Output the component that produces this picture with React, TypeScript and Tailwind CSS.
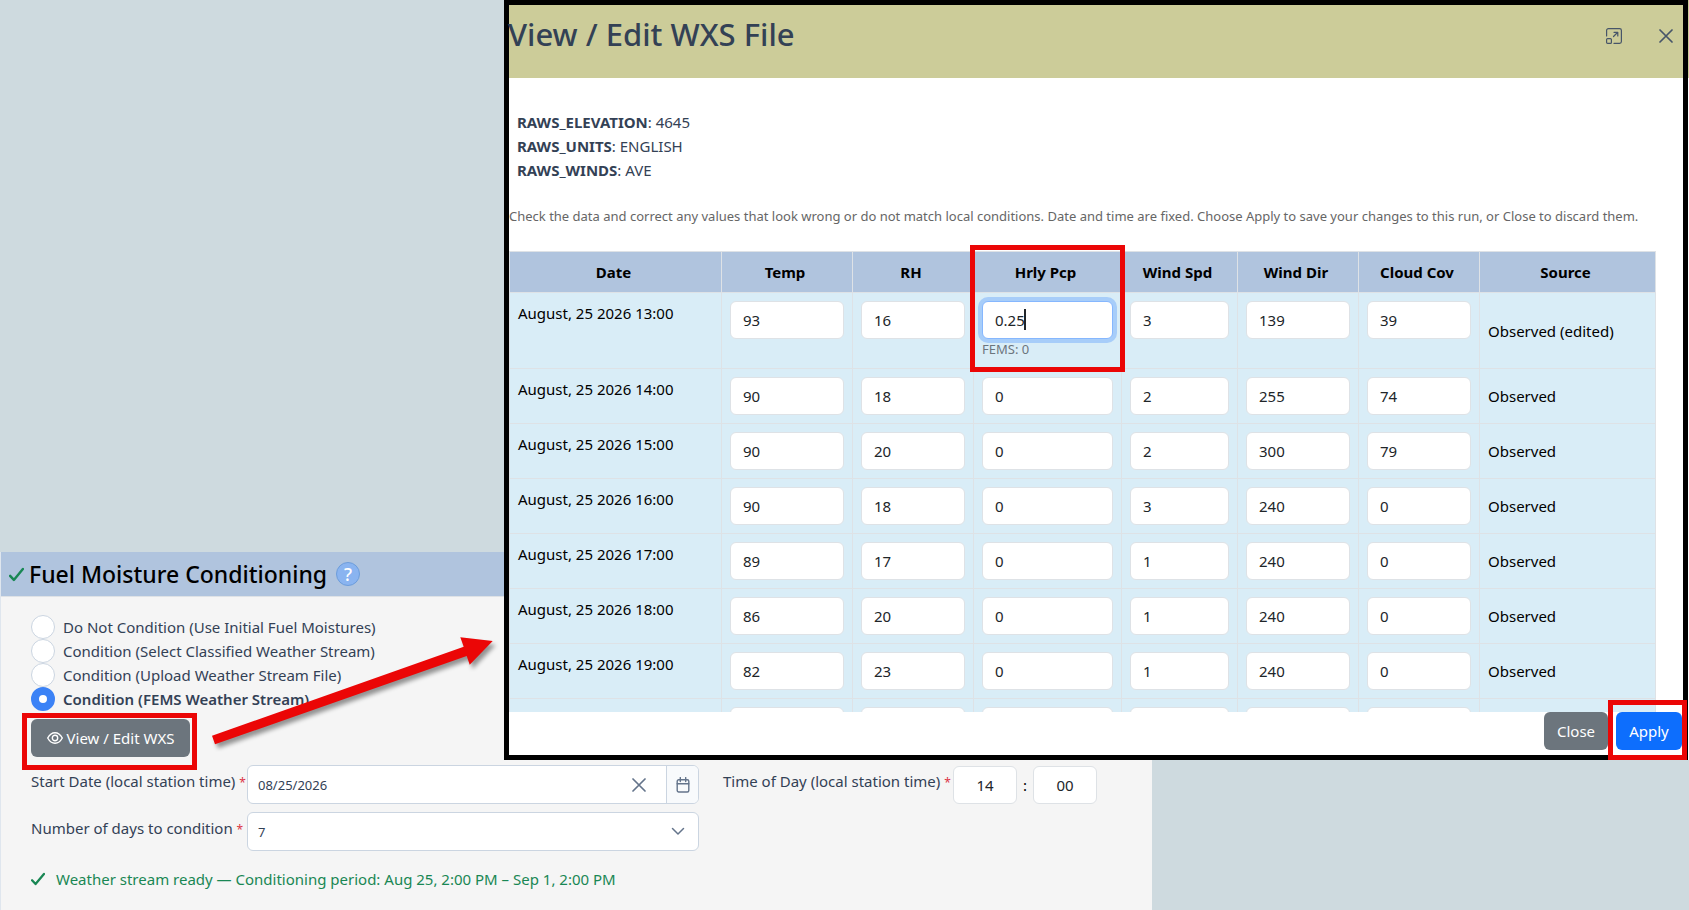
import { useState, type ReactNode } from "react";
import { clsx } from "clsx";

type Row = { date: string; values: string[]; source: string };

const COLUMNS = [
  { label: "Date", width: "w-[212px]" },
  { label: "Temp", width: "w-[131px]" },
  { label: "RH", width: "w-[121px]" },
  { label: "Hrly Pcp", width: "w-[148px]" },
  { label: "Wind Spd", width: "w-[116px]" },
  { label: "Wind Dir", width: "w-[121px]" },
  { label: "Cloud Cov", width: "w-[121px]" },
  { label: "Source", width: "w-[176px]" },
];

const ROWS: Row[] = [
  { date: "August, 25 2026 13:00", values: ["93", "16", "0.25", "3", "139", "39"], source: "Observed (edited)" },
  { date: "August, 25 2026 14:00", values: ["90", "18", "0", "2", "255", "74"], source: "Observed" },
  { date: "August, 25 2026 15:00", values: ["90", "20", "0", "2", "300", "79"], source: "Observed" },
  { date: "August, 25 2026 16:00", values: ["90", "18", "0", "3", "240", "0"], source: "Observed" },
  { date: "August, 25 2026 17:00", values: ["89", "17", "0", "1", "240", "0"], source: "Observed" },
  { date: "August, 25 2026 18:00", values: ["86", "20", "0", "1", "240", "0"], source: "Observed" },
  { date: "August, 25 2026 19:00", values: ["82", "23", "0", "1", "240", "0"], source: "Observed" },
  { date: "", values: ["", "", "", "", "", ""], source: "" },
];

const META = [
  ["RAWS_ELEVATION", "4645"],
  ["RAWS_UNITS", "ENGLISH"],
  ["RAWS_WINDS", "AVE"],
];

const MODES = [
  "Do Not Condition (Use Initial Fuel Moistures)",
  "Condition (Select Classified Weather Stream)",
  "Condition (Upload Weather Stream File)",
  "Condition (FEMS Weather Stream)",
];

function CheckIcon({ className }: { className?: string }) {
  return (
    <svg viewBox="0 0 16 16" className={clsx("shrink-0 fill-none stroke-[#198754]", className)}>
      <path d="M1.200 9.500l4 4.300L14.800 2.200" strokeWidth="2.600" strokeLinecap="round" strokeLinejoin="round" />
    </svg>
  );
}

function TimesIcon({ className }: { className?: string }) {
  return (
    <svg viewBox="0 0 14 14" className={clsx("fill-none stroke-current", className)}>
      <path d="M1 1l12 12M13 1L1 13" strokeWidth="1.700" strokeLinecap="round" />
    </svg>
  );
}

function EyeIcon() {
  return (
    <svg viewBox="0 0 16 16" className="h-4 w-4 shrink-0 fill-none stroke-current">
      <path d="M.7 8C2.600 4.500 5 2.800 8 2.800S13.400 4.500 15.300 8c-1.900 3.500-4.300 5.200-7.300 5.200S2.600 11.500.7 8z" strokeWidth="1.400" />
      <circle cx="8" cy="8" r="2.700" strokeWidth="1.400" />
    </svg>
  );
}

function MaximizeIcon() {
  return (
    <svg viewBox="0 0 16 16" className="h-4 w-4 fill-none stroke-current">
      <path d="M.6 8V2.400C.6 1.400 1.400.6 2.400.6h11.200c1 0 1.800.8 1.800 1.800v11.200c0 1-.8 1.800-1.800 1.800H8" strokeWidth="1.200" strokeLinecap="round" />
      <rect x=".6" y="10.600" width="4.800" height="4.800" rx="1" strokeWidth="1.200" />
      <path d="M7.500 8.500l4-4M8 4.300h3.800V8" strokeWidth="1.200" strokeLinecap="round" strokeLinejoin="round" />
    </svg>
  );
}

function CalendarIcon() {
  return (
    <svg viewBox="0 0 14 16" className="h-4 w-3.5 fill-none stroke-current">
      <rect x="1.200" y="2.800" width="11.600" height="12.200" rx="1.500" strokeWidth="1.400" />
      <path d="M1.200 6.800h11.600M4.300.6v4M9.700.6v4" strokeWidth="1.400" strokeLinecap="round" />
    </svg>
  );
}

function Callout({ className }: { className: string }) {
  return <span aria-hidden className={clsx("pointer-events-none absolute border-[5px] border-[#eb0606]", className)} />;
}

function FieldLabel({ htmlFor, className, children }: { htmlFor: string; className?: string; children: ReactNode }) {
  return (
    <label htmlFor={htmlFor} className={clsx("shrink-0 whitespace-nowrap pt-1", className)}>
      {children} <span className="text-xs text-[#dc3545]">*</span>
    </label>
  );
}

function ValueCell({ label, value, edited }: { label: string; value: string; edited?: boolean }) {
  return (
    <td className="border border-[#dee2e6] p-2 align-top">
      <div className="relative">
        <input
          aria-label={label}
          defaultValue={value}
          className={clsx(
            "block h-[38px] w-full rounded-md border bg-white px-3 text-[15px] text-[#212529] outline-none",
            edited ? "border-[#86b7fe] ring-4 ring-[#a7cdf9]" : "border-[#dee2e6]"
          )}
        />
        {edited && (
          <>
            <span className="absolute left-[42px] top-2 h-[21px] w-0.5 bg-[#212529]" />
            <small className="block text-[13px] leading-[21px] text-[#6c757d]">FEMS: 0</small>
            <Callout className="-bottom-3 -left-3 -right-3 -top-14" />
          </>
        )}
      </div>
    </td>
  );
}

function WeatherTable() {
  return (
    <table className="w-full table-fixed border-collapse bg-[#d9edf7] text-black">
      <thead>
        <tr className="bg-[#b0c4de]">
          {COLUMNS.map(({ label, width }) => (
            <th key={label} className={clsx("whitespace-nowrap border border-[#dee2e6] py-2 pl-2 pr-3 font-bold", width)}>
              {label}
            </th>
          ))}
        </tr>
      </thead>
      <tbody>
        {ROWS.map(({ date, values, source }) => (
          <tr key={date}>
            <td className="whitespace-nowrap border border-[#dee2e6] p-2 align-top">{date}</td>
            {values.map((value, i) => (
              <ValueCell
                key={COLUMNS[i + 1].label}
                label={`${COLUMNS[i + 1].label} ${date}`}
                value={value}
                edited={value === "0.25"}
              />
            ))}
            <td className="border border-[#dee2e6] p-2 align-middle">{source}</td>
          </tr>
        ))}
      </tbody>
    </table>
  );
}

function WxsDialog() {
  return (
    <div
      role="dialog"
      aria-labelledby="wxs-title"
      className="absolute left-[504px] right-px top-0 flex h-[760px] flex-col border-[5px] border-black bg-white"
    >
      <header className="flex h-[73px] shrink-0 items-start justify-between bg-[#cccc99] pr-2.5">
        <h1 id="wxs-title" className="-ml-px pt-2 text-[31px] font-medium leading-[42px]">
          View / Edit WXS File
        </h1>
        <div className="flex gap-[37px] pt-[23px] text-[#475569]">
          <button aria-label="Maximize">
            <MaximizeIcon />
          </button>
          <button aria-label="Close dialog">
            <TimesIcon className="h-3.5 w-3.5" />
          </button>
        </div>
      </header>

      <div className="min-h-0 flex-1 overflow-hidden pr-[27px]">
        <ul className="px-2 pt-8">
          {META.map(([name, value]) => (
            <li key={name}>
              <strong>{name}</strong>: {value}
            </li>
          ))}
        </ul>
        <p className="my-6 whitespace-nowrap text-[13px] leading-[21px] text-[#666666]">
          Check the data and correct any values that look wrong or do not match local conditions. Date and time are
          fixed. Choose Apply to save your changes to this run, or Close to discard them.
        </p>
        <WeatherTable />
      </div>

      <footer className="flex shrink-0 justify-end gap-2 pb-[5px] pr-px">
        <button className="h-[38px] w-16 rounded-md bg-[#6c757d] text-white">Close</button>
        <div className="relative">
          <button className="h-[38px] w-[66px] rounded-md bg-[#0d6efd] text-white">Apply</button>
          <Callout className="-bottom-2.5 -left-2 -right-[5px] -top-3" />
        </div>
      </footer>
    </div>
  );
}

function ConditioningPanel() {
  const [mode, setMode] = useState(3);

  return (
    <section className="relative mt-[552px] w-full max-w-[1152px] flex-1 border-l border-[#dfe6ee] bg-[#f5f5f5]">
      <h2 className="flex h-[45px] items-center border-b border-[#dee2e6] bg-[#b0c4de] pl-2 text-[23px] font-medium text-black">
        <CheckIcon className="mr-[5px] h-[15px] w-[15px]" />
        Fuel Moisture Conditioning
        <button
          aria-label="Help"
          className="ml-[9px] h-6 w-6 rounded-full border border-[#6d9ddb] bg-[#8ab4f0] text-lg leading-none text-white"
        >
          ?
        </button>
      </h2>

      <div className="pl-[30px] pt-[18px]">
        <fieldset>
          {MODES.map((label, i) => (
            <label key={label} className={clsx("flex items-center gap-2", mode === i && "font-semibold")}>
              <input
                type="radio"
                name="mode"
                checked={mode === i}
                onChange={() => setMode(i)}
                className="h-6 w-6 appearance-none rounded-full border border-[#cbd5e1] bg-white checked:border-8 checked:border-[#3b82f6]"
              />
              {label}
            </label>
          ))}
        </fieldset>

        <div className="relative mt-2 w-[159px]">
          <button className="flex h-[38px] w-full items-center justify-center gap-1 whitespace-nowrap rounded-md bg-[#6c757d] text-white">
            <EyeIcon />
            View / Edit WXS
          </button>
          <Callout className="-bottom-[13px] -left-[9px] -right-[7px] -top-1.5" />
        </div>

        <div className="mt-2 flex">
          <FieldLabel htmlFor="start-date" className="w-[216px]">
            Start Date (local station time)
          </FieldLabel>
          <div className="flex h-[39px] w-[452px] overflow-hidden rounded-md border border-[#cbd5e1] bg-white text-[#64748b]">
            <input
              id="start-date"
              defaultValue="08/25/2026"
              className="min-w-0 flex-1 px-2.5 text-[13px] text-[#334155] outline-none"
            />
            <button aria-label="Clear date" className="px-5">
              <TimesIcon className="h-3.5 w-3.5" />
            </button>
            <button
              aria-label="Open calendar"
              className="flex w-8 items-center justify-center border-l border-[#cbd5e1] bg-[#f8fafc]"
            >
              <CalendarIcon />
            </button>
          </div>
          <FieldLabel htmlFor="hour" className="ml-6 w-[230px]">
            Time of Day (local station time)
          </FieldLabel>
          <div className="flex items-center text-black">
            <input
              id="hour"
              defaultValue="14"
              className="h-[38px] w-16 rounded-md border border-[#dee2e6] bg-white text-center text-[#212529]"
            />
            <span className="w-4 text-center">:</span>
            <input
              aria-label="Minute"
              defaultValue="00"
              className="h-[38px] w-16 rounded-md border border-[#dee2e6] bg-white text-center text-[#212529]"
            />
          </div>
        </div>

        <div className="mt-2 flex">
          <FieldLabel htmlFor="days" className="w-[216px]">
            Number of days to condition
          </FieldLabel>
          <div className="relative w-[452px]">
            <select
              id="days"
              defaultValue="7"
              className="h-[39px] w-full appearance-none rounded-md border border-[#cbd5e1] bg-white px-2.5 text-[13px] text-[#334155]"
            >
              <option>7</option>
            </select>
            <svg
              viewBox="0 0 14 14"
              className="pointer-events-none absolute right-3.5 top-3 h-3.5 w-3.5 fill-none stroke-[#64748b]"
            >
              <path d="M1.500 4.500L7 10l5.500-5.500" strokeWidth="1.500" strokeLinecap="round" strokeLinejoin="round" />
            </svg>
          </div>
        </div>

        <p className="mt-4 flex items-center gap-[11px] text-[#198754]">
          <CheckIcon className="h-3.5 w-3.5" />
          Weather stream ready — Conditioning period: Aug 25, 2:00 PM – Sep 1, 2:00 PM
        </p>
      </div>

      {/* pointer from the button to the dialog */}
      <svg
        viewBox="0 0 300 130"
        className="pointer-events-none absolute left-[204px] top-[78px] h-[130px] w-[300px] fill-[#eb0606] drop-shadow-[3px_4px_2px_rgba(0,0,0,0.4)]"
      >
        <path d="M7 105.700L258.700 16.700 255.300 7.300 287.700 11 264.700 34.700 261.700 26 10 114.300z" />
      </svg>
    </section>
  );
}

export default function App() {
  return (
    <main className="relative flex min-h-screen flex-col overflow-hidden bg-[#cedadf] font-['Noto_Sans','Open_Sans',sans-serif] text-[15px] leading-6 text-[#334155]">
      <ConditioningPanel />
      <div className="absolute right-0 top-0 h-[760px] w-px border-t-[78px] border-[#cccc99] bg-white" />
      <WxsDialog />
    </main>
  );
}
